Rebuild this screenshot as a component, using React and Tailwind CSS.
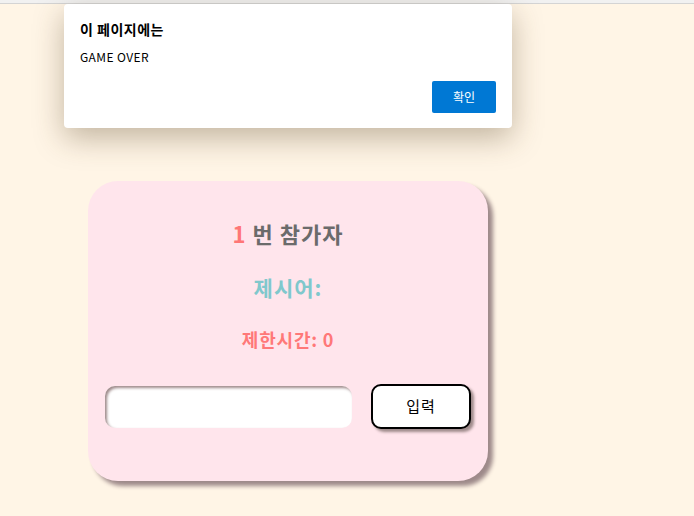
export default function App() {
  return (
    <div className="relative min-h-[516px] w-full bg-[#fff5e6] font-['Noto_Sans_CJK_KR','Noto_Sans',sans-serif]">
      {/* browser chrome strip */}
      <div className="h-[4px] bg-[#f1f1f1] border-b border-[#d4d4d4]" />

      {/* game card */}
      <div className="pl-[88px] pt-[177px] pb-[35px]">
        <div className="w-[400px] h-[300px] rounded-[30px] bg-[#ffe5ec] shadow-[5px_5px_4px_#9e8a8a] flex flex-col items-center pt-[34px]">
          <h2 className="text-[22px] font-bold leading-[36px] tracking-[1px] text-[#6b6b6b]">
            <span className="text-[#ff7676]">1</span> 번 참가자
          </h2>
          <h3 className="mt-[18px] text-[21px] font-bold leading-[36px] tracking-[1px] text-[#80c8cc]">제시어:</h3>
          <p className="mt-[19px] text-[18px] font-bold leading-[30px] tracking-[0.8px] text-[#ff7878]">제한시간: 0</p>
          <div className="mt-[30px] flex w-full items-center justify-between px-[17px]">
            <input
              type="text"
              className="w-[247px] h-[42px] rounded-[10px] bg-white outline-none shadow-[inset_2px_2px_3px_#9e8a8a]"
            />
            <button className="w-[100px] h-[45px] rounded-[10px] border-2 border-black bg-white text-[15px] tracking-[1px] text-black shadow-[3px_3px_3px_#9e8a8a]">
              입력
            </button>
          </div>
        </div>
      </div>

      {/* alert dialog */}
      <div className="absolute left-[64px] top-[4px] w-[448px] h-[124px] rounded-[4px] bg-white shadow-[0_10px_30px_rgba(80,60,30,0.35)] px-[16px] pt-[15px]">
        <div className="text-[14px] font-bold leading-[20px] tracking-[0.5px] text-black">이 페이지에는</div>
        <div className="mt-[10px] text-[12px] leading-[16px] tracking-[0.4px] text-black">GAME OVER</div>
        <div className="mt-[16px] flex justify-end">
          <button className="w-[64px] h-[32px] rounded-[2px] bg-[#0078d4] text-[12px] text-white">확인</button>
        </div>
      </div>
    </div>
  );
}
